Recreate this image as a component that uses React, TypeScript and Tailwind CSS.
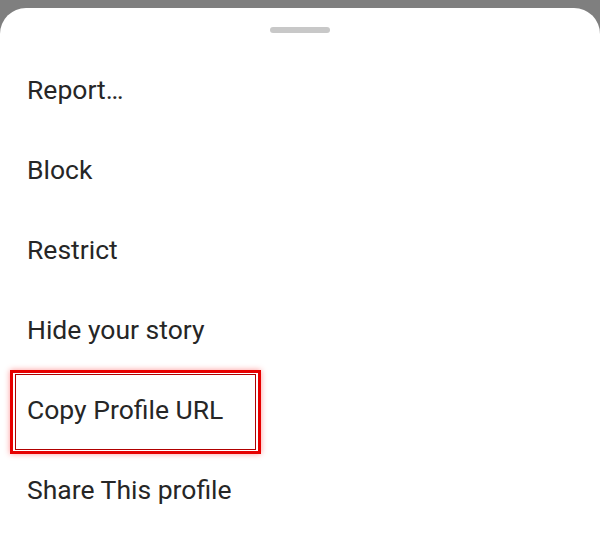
import React from "react";

const items = [
  "Report…",
  "Block",
  "Restrict",
  "Hide your story",
  "Copy Profile URL",
  "Share This profile",
];

const App = () => {
  return (
    <div className="w-[600px] h-[551px] bg-[#7f7f7f] pt-[8px] overflow-hidden font-['Roboto',sans-serif]">
      <div className="relative h-full bg-white rounded-t-[26px]">
        <div className="flex justify-center pt-[19px]">
          <div className="w-[60px] h-[6px] rounded-full bg-[#c8c8c8]" />
        </div>
        <ul className="mt-[17px]">
          {items.map((label) => (
            <li
              key={label}
              className="h-[80px] flex items-center pl-[27px] text-[26.5px] text-[#262626]"
            >
              {label}
            </li>
          ))}
        </ul>
        {/* highlight around "Copy Profile URL" */}
        <div className="absolute left-[10px] top-[362px] w-[251px] h-[84px] border-[3px] border-[#e60000] shadow-[0_0_6px_rgba(255,0,0,0.4)]">
          <div className="mx-[2px] my-[1px] h-[calc(100%-2px)] border border-[#b00000]" />
        </div>
      </div>
    </div>
  );
};

export default App;
